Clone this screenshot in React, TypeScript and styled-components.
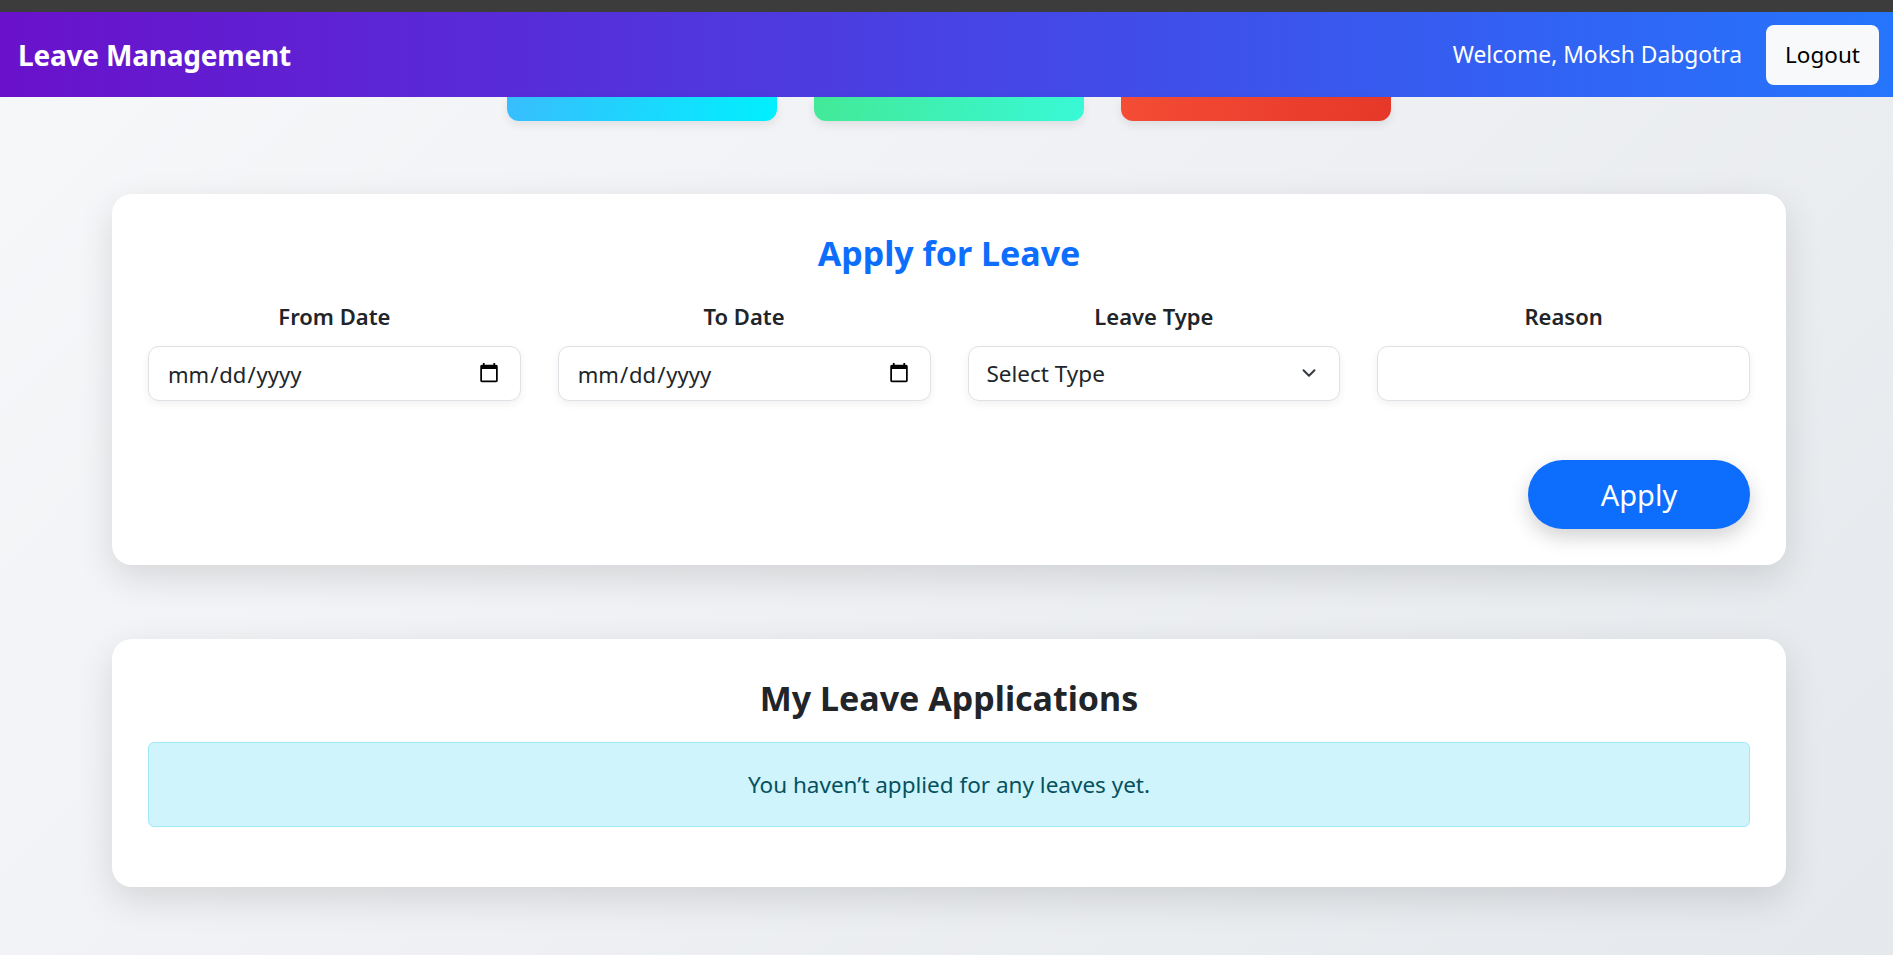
import styled, { createGlobalStyle } from "styled-components";
import { ChevronDown } from "lucide-react";

const GlobalStyle = createGlobalStyle`
  html, body {
    margin: 0;
    padding: 0;
  }
  body {
    font-family: "Noto Sans", "Open Sans", Arial, sans-serif;
    color: #212529;
    background: linear-gradient(135deg, #f7f8fa 0%, #eef0f3 50%, #e5e8ec 100%);
    min-height: 955px;
  }
  * { box-sizing: border-box; }
`;

const TopStrip = styled.div`
  height: 12px;
  background: #3c3c3c;
`;

const Navbar = styled.nav`
  height: 85px;
  display: flex;
  align-items: center;
  justify-content: space-between;
  padding: 0 14px 0 18px;
  background: linear-gradient(90deg, #6a11cb 0%, #2575fc 100%);
`;

const Brand = styled.div`
  color: #fff;
  font-weight: 700;
  font-size: 28px;
  letter-spacing: -0.2px;
`;

const NavRight = styled.div`
  display: flex;
  align-items: center;
  gap: 24px;
`;

const Welcome = styled.span`
  color: #fff;
  font-size: 22.8px;
`;

const LogoutButton = styled.button`
  width: 113px;
  height: 60px;
  border: none;
  border-radius: 8px;
  background: #f8f9fa;
  color: #000;
  font-family: inherit;
  font-size: 22.5px;
`;

const StatRow = styled.div`
  display: flex;
  justify-content: center;
  gap: 37px;
  padding-left: 5px;
`;

const StatCard = styled.div<{ $from: string; $to: string }>`
  width: 270px;
  height: 24px;
  border-radius: 0 0 12px 12px;
  background: linear-gradient(100deg, ${(p) => p.$from}, ${(p) => p.$to});
  box-shadow: 0 4px 10px rgba(0, 0, 0, 0.08);
`;

const Card = styled.section<{ $top: number; $bottom: number }>`
  margin: ${(p) => p.$top}px 107px 0 112px;
  padding: 40px 36px ${(p) => p.$bottom}px;
  background: #fff;
  border-radius: 20px;
  box-shadow: 0 12px 36px rgba(0, 0, 0, 0.12);
`;

const Title = styled.h3<{ $color: string }>`
  margin: 0;
  text-align: center;
  color: ${(p) => p.$color};
  font-size: 34px;
  font-weight: 700;
  line-height: 38px;
`;

const FormGrid = styled.div`
  display: grid;
  grid-template-columns: repeat(4, 1fr);
  column-gap: 37px;
  margin-top: 29px;
`;

const Field = styled.div`
  display: flex;
  flex-direction: column;
`;

const Label = styled.label`
  text-align: center;
  font-weight: 600;
  font-size: 22px;
  line-height: 30px;
  margin-bottom: 15px;
`;

const Input = styled.input`
  height: 55px;
  width: 100%;
  padding: 0 18px;
  border: 1px solid #dee2e6;
  border-radius: 11px;
  background: #fff;
  font-family: inherit;
  font-size: 22px;
  color: #212529;
  box-shadow: 0 3px 8px rgba(0, 0, 0, 0.06);
  outline: none;
  &::-webkit-calendar-picker-indicator {
    width: 22px;
    height: 24px;
    opacity: 1;
  }
`;

const SelectWrap = styled.div`
  position: relative;
`;

const Select = styled.select`
  appearance: none;
  height: 55px;
  width: 100%;
  padding: 0 18px;
  border: 1px solid #dee2e6;
  border-radius: 11px;
  background: #fff;
  font-family: inherit;
  font-size: 22.5px;
  color: #212529;
  box-shadow: 0 3px 8px rgba(0, 0, 0, 0.06);
  outline: none;
`;

const Chevron = styled(ChevronDown)`
  position: absolute;
  right: 20px;
  top: 16px;
  pointer-events: none;
  color: #343a40;
`;

const Actions = styled.div`
  display: flex;
  justify-content: flex-end;
  margin-top: 59px;
`;

const ApplyButton = styled.button`
  width: 222px;
  height: 69px;
  border: none;
  border-radius: 35px;
  background: #0d6efd;
  color: #fff;
  font-family: inherit;
  font-size: 29px;
  box-shadow: 0 8px 20px rgba(0, 0, 0, 0.18);
`;

const InfoAlert = styled.div`
  margin-top: 25px;
  height: 85px;
  display: flex;
  align-items: center;
  justify-content: center;
  background: #cff4fc;
  border: 1px solid #9eeaf9;
  border-radius: 6px;
  color: #055160;
  font-size: 22.5px;
`;

export default function App() {
  return (
    <>
      <GlobalStyle />
      <TopStrip />
      <Navbar>
        <Brand>Leave Management</Brand>
        <NavRight>
          <Welcome>Welcome, Moksh Dabgotra</Welcome>
          <LogoutButton>Logout</LogoutButton>
        </NavRight>
      </Navbar>

      <StatRow>
        <StatCard $from="#38bdfd" $to="#00f0fe" />
        <StatCard $from="#43e997" $to="#38f9d7" />
        <StatCard $from="#f44c35" $to="#e63828" />
      </StatRow>

      <Card $top={73} $bottom={36}>
        <Title $color="#0d6efd">Apply for Leave</Title>
        <FormGrid>
          <Field>
            <Label>From Date</Label>
            <Input type="date" />
          </Field>
          <Field>
            <Label>To Date</Label>
            <Input type="date" />
          </Field>
          <Field>
            <Label>Leave Type</Label>
            <SelectWrap>
              <Select defaultValue="">
                <option value="">Select Type</option>
                <option value="sick">Sick Leave</option>
                <option value="casual">Casual Leave</option>
              </Select>
              <Chevron size={22} strokeWidth={2.2} />
            </SelectWrap>
          </Field>
          <Field>
            <Label>Reason</Label>
            <Input type="text" />
          </Field>
        </FormGrid>
        <Actions>
          <ApplyButton>Apply</ApplyButton>
        </Actions>
      </Card>

      <Card $top={74} $bottom={60}>
        <Title $color="#212529">My Leave Applications</Title>
        <InfoAlert>You haven’t applied for any leaves yet.</InfoAlert>
      </Card>
    </>
  );
}
